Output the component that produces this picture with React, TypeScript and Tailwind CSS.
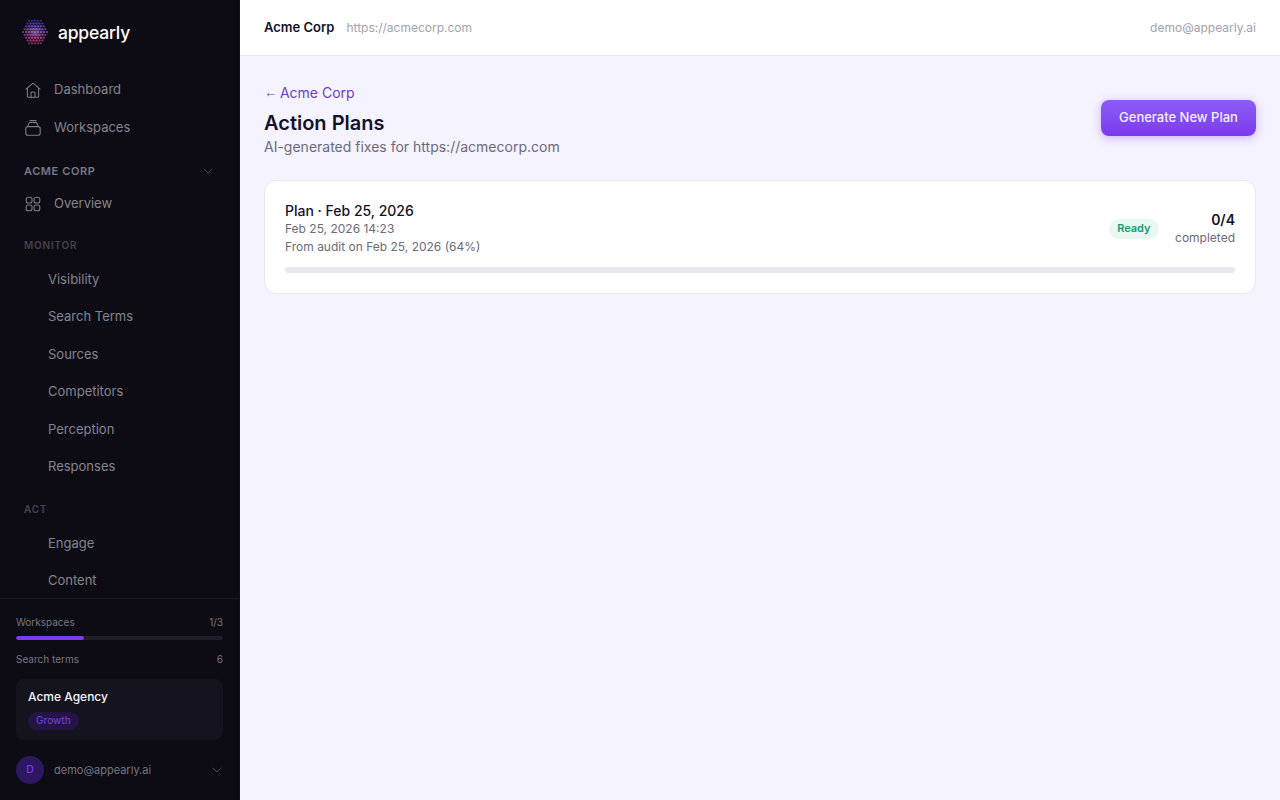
import { ChevronDown } from "lucide-react";

const monitorItems = ["Visibility", "Search Terms", "Sources", "Competitors", "Perception", "Responses"];
const actItems = ["Engage", "Content"];

// dots for the round logo, cut to a circle. blue on top, pink at the bottom, dim at the rim
const logoDots: { x: number; y: number; r: number; c: string }[] = [];
for (let row = -4; row <= 4; row++) {
  for (let col = -4; col <= 4; col++) {
    const x = 12 + col * 2.75 + (row % 2 ? 1.375 : 0);
    const y = 12 + row * 2.6;
    const d = Math.hypot(x - 12, y - 12);
    if (d > 11.8) continue;
    const t = (y - 1.6) / 20.8;
    const dim = 1 - (d / 12) * 0.35;
    const red = Math.round((90 + t * 130) * dim);
    const green = Math.round((60 + (1 - Math.abs(t - 0.5) * 2) * 40) * dim);
    const blue = Math.round((235 - t * 90) * dim);
    logoDots.push({ x, y, r: 1.5 - d * 0.045, c: `rgb(${red},${green},${blue})` });
  }
}

function Logo() {
  return (
    <svg width="26" height="26" viewBox="0 0 24 24" className="shrink-0 mb-[2px]">
      {logoDots.map((d, i) => (
        <circle key={i} cx={d.x} cy={d.y} r={d.r} fill={d.c} />
      ))}
    </svg>
  );
}

function HomeIcon() {
  return (
    <svg width="18" height="18" viewBox="0 0 18 18" fill="none" stroke="currentColor" strokeWidth="1.1" strokeLinecap="round" strokeLinejoin="round">
      <path d="M2 8.2 9 2.2l7 6" />
      <path d="M3.4 7.2v8a1 1 0 0 0 1 1h9.2a1 1 0 0 0 1-1v-8" />
      <path d="M7 16.2v-4.4a.8.8 0 0 1 .8-.8h2.4a.8.8 0 0 1 .8.8v4.4" />
    </svg>
  );
}

function StackIcon() {
  return (
    <svg width="18" height="18" viewBox="0 0 18 18" fill="none" stroke="currentColor" strokeWidth="1.1" strokeLinecap="round" strokeLinejoin="round">
      <rect x="1.8" y="7.6" width="14.4" height="8.6" rx="2" />
      <path d="M3.8 7.4 5 4.2a1 1 0 0 1 1-.7h6a1 1 0 0 1 1 .7l1.2 3.2" />
      <path d="M6 1.6h6" />
    </svg>
  );
}

function GridIcon() {
  return (
    <svg width="18" height="18" viewBox="0 0 18 18" fill="none" stroke="currentColor" strokeWidth="1.1">
      <rect x="2.2" y="2.2" width="5.8" height="5.8" rx="2" />
      <rect x="10" y="2.2" width="5.8" height="5.8" rx="2" />
      <rect x="2.2" y="10" width="5.8" height="5.8" rx="2" />
      <rect x="10" y="10" width="5.8" height="5.8" rx="2" />
    </svg>
  );
}

function Sidebar() {
  return (
    <aside className="w-[240px] h-[800px] shrink-0 flex flex-col bg-[#0d0c14] border-r border-[#14131c] overflow-hidden">
      <div className="h-[68px] shrink-0 flex items-center gap-[10px] pl-[22px] pb-[2px]">
        <Logo />
        <span className="text-[17.5px] font-medium text-white tracking-[-0.2px]">appearly</span>
      </div>

      <nav className="flex-1 min-h-0 overflow-hidden">
        <div className="flex flex-col gap-[6px] pl-[24px] pt-[6px] text-[#7b7a85]">
          <div className="h-[32px] flex items-center gap-[12px]">
            <HomeIcon />
            <span className="text-[13px] text-[#85848e]">Dashboard</span>
          </div>
          <div className="h-[32px] flex items-center gap-[12px]">
            <StackIcon />
            <span className="text-[13px] text-[#85848e]">Workspaces</span>
          </div>
        </div>

        <div className="h-[20px] mt-[17px] flex items-center justify-between pl-[24px] pr-[23px]">
          <span className="text-[11px] font-semibold tracking-[0.6px] text-[#7b7a85]">ACME CORP</span>
          <ChevronDown size={16} strokeWidth={1.25} className="text-[#55545e]" />
        </div>

        <div className="h-[32px] mt-[7px] pl-[24px] flex items-center gap-[12px] text-[#7b7a85]">
          <GridIcon />
          <span className="text-[13px] text-[#85848e]">Overview</span>
        </div>

        <div className="mt-[17px] pl-[24px] h-[16px] flex items-center text-[10px] font-semibold tracking-[0.8px] text-[#44434d]">MONITOR</div>
        <ul className="mt-[7.5px] pl-[48px]">
          {monitorItems.map((item) => (
            <li key={item} className="h-[37.5px] flex items-center text-[13px] text-[#85848e]">{item}</li>
          ))}
        </ul>

        <div className="mt-[15.5px] pl-[24px] h-[16px] flex items-center text-[10px] font-semibold tracking-[0.8px] text-[#44434d]">ACT</div>
        <ul className="mt-[7.5px] pl-[48px]">
          {actItems.map((item) => (
            <li key={item} className="h-[37.5px] flex items-center text-[13px] text-[#85848e]">{item}</li>
          ))}
        </ul>
      </nav>

      <div className="h-[202px] shrink-0 border-t border-[#1b1a24] px-[16px] pt-[15px]">
        <div className="flex justify-between text-[10px] leading-[16px] text-[#77767f]">
          <span>Workspaces</span>
          <span>1/3</span>
        </div>
        <div className="h-[4px] mt-[6px] rounded-full bg-[#1e1d28] overflow-hidden">
          <div className="h-full w-[68px] rounded-full bg-[#7c3aed]" />
        </div>
        <div className="flex justify-between mt-[11px] text-[10px] leading-[16px] text-[#77767f]">
          <span>Search terms</span>
          <span>6</span>
        </div>
        <div className="h-[61px] mt-[12px] rounded-[8px] bg-[#15141e] px-[12px] pt-[9px]">
          <div className="text-[12px] leading-[18px] font-medium text-[#f4f4f6]">Acme Agency</div>
          <span className="inline-flex items-center h-[18px] mt-[5px] px-[8px] rounded-full bg-[#251546] text-[10px] font-medium text-[#6d3bd6]">Growth</span>
        </div>
        <div className="flex items-center mt-[16px]">
          <div className="w-[28px] h-[28px] rounded-full bg-[#2c1760] flex items-center justify-center text-[10.5px] font-medium text-[#7c3aed]">D</div>
          <span className="ml-[10px] text-[11px] text-[#77767f]">demo@appearly.ai</span>
          <ChevronDown size={16} strokeWidth={1.25} className="ml-auto mr-[-2px] text-[#55545e]" />
        </div>
      </div>
    </aside>
  );
}

export default function App() {
  return (
    <div className="flex h-[800px] w-[1280px] overflow-hidden bg-[#f5f3ff] font-['Inter',sans-serif]">
      <Sidebar />
      <div className="flex-1 min-w-0 flex flex-col">
        <header className="h-[56px] shrink-0 bg-white border-b border-[#e8e7ee] flex items-center px-[24px]">
          <span className="text-[13px] font-semibold text-[#13112b]">Acme Corp</span>
          <span className="ml-[12px] text-[12px] text-[#a3a2ad]">https://acmecorp.com</span>
          <span className="ml-auto text-[12px] text-[#a3a2ad]">demo@appearly.ai</span>
        </header>

        <main className="flex-1 px-[24px] pt-[27px]">
          <div className="flex items-start justify-between">
            <div>
              <div className="h-[20px] text-[14px] leading-[20px] text-[#6d3bc9]">
                <span className="inline-block w-[12px] leading-[14px] align-[1px] font-['Liberation_Sans',sans-serif] text-[13px]">←</span> Acme Corp
              </div>
              <h1 className="mt-[6px] text-[20px] leading-[28px] font-semibold text-[#13112b]">Action Plans</h1>
              <p className="text-[14px] leading-[20px] text-[#6b6a7b]">AI-generated fixes for https://acmecorp.com</p>
            </div>
            <button className="mt-[17px] h-[36px] w-[155px] rounded-[8px] bg-gradient-to-b from-[#8b5cf6] to-[#7c3aed] text-[13px] font-medium text-[#f4efff] shadow-[0_2px_10px_rgba(124,58,237,0.35)]">
              Generate New Plan
            </button>
          </div>

          <section className="mt-[23px] h-[114px] rounded-[12px] bg-white border border-[#e8e7ee] px-[20px] pt-[21px]">
            <div className="flex items-center justify-between">
              <div>
                <div className="text-[14px] leading-[18px] font-medium text-[#13112b]">Plan · Feb 25, 2026</div>
                <div className="text-[12px] leading-[18px] text-[#6b6a7b]">Feb 25, 2026 14:23</div>
                <div className="text-[12px] leading-[18px] text-[#6b6a7b]">From audit on Feb 25, 2026 (64%)</div>
              </div>
              <div className="flex items-center gap-[16px]">
                <span className="inline-flex items-center h-[20px] px-[8.5px] mb-[1px] rounded-full bg-[#e9f8f2] text-[11px] font-semibold text-[#0e9f6e]">Ready</span>
                <div className="text-right">
                  <div className="text-[14px] leading-[18px] font-semibold text-[#13112b]">0/4</div>
                  <div className="text-[12px] leading-[18px] text-[#6b6a7b]">completed</div>
                </div>
              </div>
            </div>
            <div className="mt-[11px] h-[6px] rounded-full bg-[#e8e7ee]" />
          </section>
        </main>
      </div>
    </div>
  );
}
